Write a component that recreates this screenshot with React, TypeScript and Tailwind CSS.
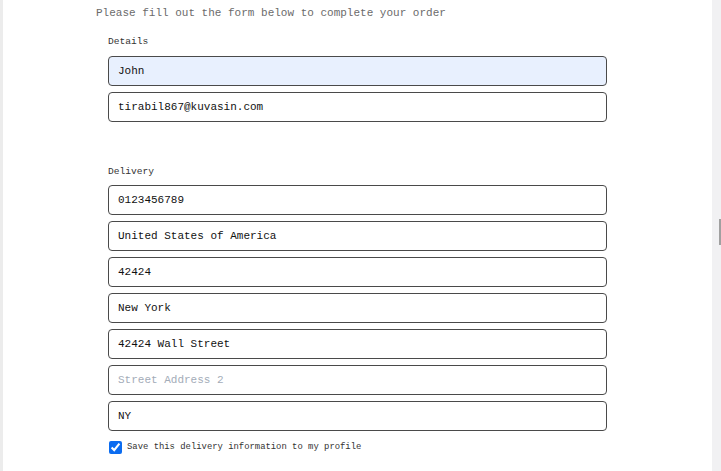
import React from 'react';

const mono = { fontFamily: '"Liberation Mono", "DejaVu Sans Mono", monospace' };

const Field: React.FC<{ value?: string; placeholder?: string; filled?: boolean }> = ({ value, placeholder, filled }) => (
    <input
        readOnly
        value={value}
        placeholder={placeholder}
        className={`block w-[499px] h-[30px] rounded-[4px] border border-[#4a4a4a] px-[9px] text-[11px] text-[#111] placeholder:text-[#a3acb8] outline-none ${filled ? 'bg-[#e8f0fe]' : 'bg-white'}`}
        style={mono}
    />
);

export default function App() {
    return (
        <div className="flex w-[721px] h-[471px] bg-white overflow-hidden" style={mono}>
            <div className="flex-1 border-l-[3px] border-[#ececec]">
                <p className="ml-[93px] mt-[6px] text-[11px] leading-[14px] text-[#6b6b6b]">
                    Please fill out the form below to complete your order
                </p>
                <div className="ml-[105px]">
                    <p className="mt-[16px] text-[9.6px] leading-[12px] text-[#333]">Details</p>
                    <div className="mt-[8px] flex flex-col gap-[6px]">
                        <Field value="John" filled />
                        <Field value="tirabil867@kuvasin.com" />
                    </div>
                    <p className="mt-[44px] text-[9.6px] leading-[12px] text-[#333]">Delivery</p>
                    <div className="mt-[7px] flex flex-col gap-[6px]">
                        <Field value="0123456789" />
                        <Field value="United States of America" />
                        <Field value="42424" />
                        <Field value="New York" />
                        <Field value="42424 Wall Street" />
                        <Field placeholder="Street Address 2" />
                        <Field value="NY" />
                    </div>
                    <label className="mt-[10px] flex items-center gap-[5px] text-[8.9px] text-[#333]">
                        <input type="checkbox" checked readOnly className="m-0 ml-[1px] w-[13px] h-[13px] accent-[#0b6cf0]" />
                        <span>Save this delivery information to my profile</span>
                    </label>
                </div>
            </div>
            <div className="w-[9px] bg-[#f1f1f3] flex flex-col items-end pt-[219px]">
                <div className="w-[2px] h-[26px] bg-[#a0a0a0]" />
            </div>
        </div>
    );
}
